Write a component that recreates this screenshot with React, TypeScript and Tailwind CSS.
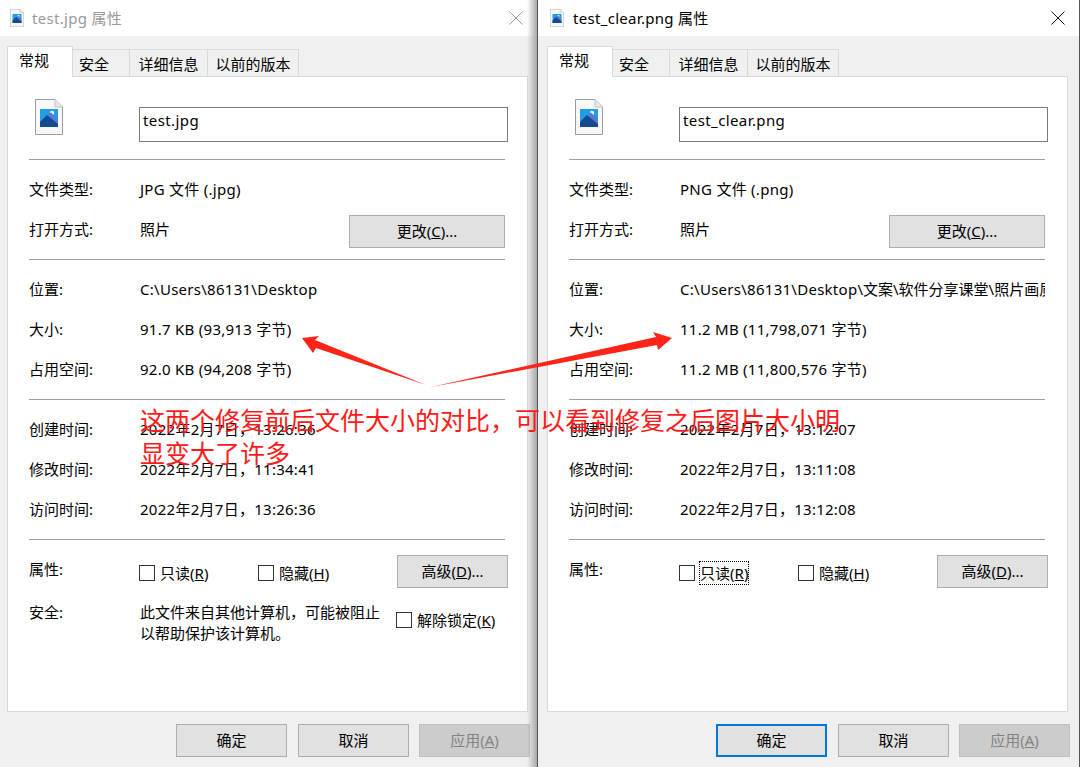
import type { ReactNode } from "react";

function FileIcon({ className }: { className: string }) {
  return (
    <svg viewBox="0 0 28 36" className={className}>
      <path d="M0.5 0.5H20L27.5 8V35.5H0.5Z" fill="#f7f7f7" stroke="#9c9c9c" />
      <path d="M20 0.5V8H27.5" fill="#e8e8e8" stroke="#c4c4c4" />
      <rect x="5" y="10" width="18" height="18" fill="#1f9ee6" />
      <circle cx="17" cy="14" r="2.2" fill="#e6f4fd" />
      <path d="M13 15L16 13.5L23 20V27L19 28Z" fill="#5a78d8" />
      <path d="M5 28V23L12 16L23 25V28Z" fill="#164a8e" />
    </svg>
  );
}

function Btn({ children, className = "" }: { children: ReactNode; className?: string }) {
  return (
    <div className={`flex h-[33px] shrink-0 items-center justify-center border border-[#adadad] bg-[#e1e1e1] text-black ${className}`}>
      {children}
    </div>
  );
}

function Row({ label, children }: { label: string; children: ReactNode }) {
  return (
    <div className="flex h-10 items-center">
      <div className="w-[111px] shrink-0">{label}</div>
      {children}
    </div>
  );
}

function Val({ children }: { children: ReactNode }) {
  return <span className="tracking-[0.27px]">{children}</span>;
}

function Section({ children }: { children: ReactNode }) {
  return <div className="w-[476px] border-t border-[#a0a0a0] pt-[9px] pb-[10px]">{children}</div>;
}

function Check({ label, k, className = "", focused = false }: { label: string; k: string; className?: string; focused?: boolean }) {
  return (
    <div className={`flex shrink-0 items-center gap-[5px] ${className}`}>
      <div className="h-4 w-4 shrink-0 border border-[#333] bg-white" />
      <span className={focused ? "outline-1 outline-dotted outline-black" : ""}>
        {label}(<u>{k}</u>)
      </span>
    </div>
  );
}

type WinProps = {
  name: string;
  typeText: string;
  location: string;
  locationTail?: string;
  size: string;
  used: string;
  created: string;
  modified: string;
  accessed: string;
  active: boolean;
  outerClass: string;
  bodyClass: string;
};

function PropsWindow(p: WinProps) {
  return (
    <div className={`relative flex h-[767px] shrink-0 flex-col ${p.outerClass}`}>
      {/* 标题栏 */}
      <div className="flex h-9 shrink-0 items-center bg-white">
        <FileIcon className={`h-[18px] w-[14px] ${p.active ? "ml-[12px]" : "ml-[10px]"}`} />
        <span className={`text-[15px] tracking-[0.3px] ${p.active ? "ml-[9px] text-black" : "ml-2 text-[#999]"}`}>{p.name} 属性</span>
        <svg viewBox="0 0 14 14" className="mr-[14px] ml-auto h-[14px] w-[14px]" fill="none" stroke={p.active ? "#111" : "#999"}>
          <path d="M0.5 0.5L13.5 13.5M13.5 0.5L0.5 13.5" />
        </svg>
      </div>

      <div className={`flex flex-1 flex-col bg-[#f0f0f0] pt-[10px] ${p.bodyClass}`}>
        {/* tabs */}
        <div className="relative z-10 -mb-px flex h-[31px] items-end text-[15px]">
          <div className="h-[31px] w-[66px] border border-b-0 border-[#d9d9d9] bg-white pt-[2px] pl-[11px]">常规</div>
          <div className="flex h-[28px] w-[57px] items-center border-y border-r border-[#d9d9d9] pt-[2px] pl-[6px]">安全</div>
          <div className="flex h-[28px] w-[78px] items-center justify-center border-y border-r border-[#d9d9d9] pt-[2px]">详细信息</div>
          <div className="flex h-[28px] w-[91px] items-center justify-center border-y border-r border-[#d9d9d9] pt-[2px]">以前的版本</div>
        </div>

        {/* 面板 */}
        <div className="h-[636px] w-[521px] border border-[#d9d9d9] bg-white pl-[21px]">
          <div className="flex h-[82px]">
            <FileIcon className="mt-[22px] ml-[6px] h-9 w-7" />
            <div className="mt-[30px] ml-[76px] h-[35px] w-[369px] border border-[#7a7a7a] pl-[3px] leading-[24px] tracking-[0.4px]">{p.name}</div>
          </div>

          <Section>
            <Row label="文件类型:"><Val>{p.typeText}</Val></Row>
            <Row label="打开方式:">
              <span className="flex-1">照片</span>
              <Btn className="mt-[5px] w-[156px]">
                <span>更改(<u>C</u>)...</span>
              </Btn>
            </Row>
          </Section>

          <Section>
            <Row label="位置:">
              <div className="w-[368px] overflow-hidden whitespace-nowrap">
                <Val>{p.location}</Val>
                {p.locationTail}
              </div>
            </Row>
            <Row label="大小:"><Val>{p.size}</Val></Row>
            <Row label="占用空间:"><Val>{p.used}</Val></Row>
          </Section>

          <Section>
            <Row label="创建时间:"><Val>{p.created}</Val></Row>
            <Row label="修改时间:"><Val>{p.modified}</Val></Row>
            <Row label="访问时间:"><Val>{p.accessed}</Val></Row>
          </Section>

          <div className="w-[476px] border-t border-[#a0a0a0] pt-[15px]">
            <div className="flex h-[33px]">
              <div className="mt-[3px] w-[110px] shrink-0">属性:</div>
              <Check label="只读" k="R" className="mt-[6px] h-[24px] w-[119px]" focused={p.active} />
              <Check label="隐藏" k="H" className="mt-[6px] h-[24px] w-[139px]" />
              <Btn className="w-[111px]">
                <span>高级(<u>D</u>)...</span>
              </Btn>
            </div>
            {!p.active && (
              <div className="mt-[14px] flex">
                <div className="-mt-px w-[111px] shrink-0">安全:</div>
                <div className="w-[256px] shrink-0 leading-[21px]">
                  此文件来自其他计算机，可能被阻止
                  <br />
                  以帮助保护该计算机。
                </div>
                <Check label="解除锁定" k="K" className="mt-[9px] h-[18px] whitespace-nowrap" />
              </div>
            )}
          </div>
        </div>

        {/* 底部按钮 */}
        <div className="mt-[12px] flex">
          <div className={`ml-[169px] flex h-[33px] w-[111px] items-center justify-center bg-[#e1e1e1] ${p.active ? "border-2 border-[#0078d7]" : "border border-[#adadad]"}`}>确定</div>
          <Btn className="ml-[11px] w-[111px]">取消</Btn>
          <div className="ml-[10px] flex h-[33px] w-[111px] items-center justify-center border border-[#bfbfbf] bg-[#ccc] text-[#838383]">
            <span>应用(<u>A</u>)</span>
          </div>
        </div>
      </div>
    </div>
  );
}

export default function App() {
  return (
    <div className="relative flex h-[767px] w-[1080px] overflow-hidden bg-[#f0f0f0] text-[15px] text-black [font-family:'Noto_Sans','Noto_Sans_CJK_SC',sans-serif]">
      <PropsWindow
        name="test.jpg"
        typeText="JPG 文件 (.jpg)"
        location="C:\Users\86131\Desktop"
        size="91.7 KB (93,913 字节)"
        used="92.0 KB (94,208 字节)"
        created="2022年2月7日，13:26:36"
        modified="2022年2月7日，11:34:41"
        accessed="2022年2月7日，13:26:36"
        active={false}
        outerClass="w-[537px]"
        bodyClass="pl-[7px]"
      />
      <PropsWindow
        name="test_clear.png"
        typeText="PNG 文件 (.png)"
        location="C:\Users\86131\Desktop"
        locationTail="\文案\软件分享课堂\照片画质"
        size="11.2 MB (11,798,071 字节)"
        used="11.2 MB (11,800,576 字节)"
        created="2022年2月7日，13:12:07"
        modified="2022年2月7日，13:11:08"
        accessed="2022年2月7日，13:12:08"
        active={true}
        outerClass="w-[543px] border-x border-[#555]"
        bodyClass="pl-[9px]"
      />

      {/* 窗口阴影 */}
      <div className="absolute top-0 left-[527px] h-[767px] w-[10px] bg-gradient-to-r from-transparent to-[#a8a8a8]" />

      {/* 红色标注 */}
      <svg className="absolute top-0 left-0 h-[767px] w-[1080px]" viewBox="0 0 1080 767" fill="#ff2318">
        <path d="M426 385L316 348L313 353L302 338L319 336L315 340Z" />
        <path d="M431 387L657 345L658 350L672 338L653 332L656 337Z" />
      </svg>
      <div className="absolute top-[404px] left-[140px] w-[710px] text-[25px] leading-[33px] text-[#ff1a1a]">
        这两个修复前后文件大小的对比，可以看到修复之后图片大小明显变大了许多
      </div>
    </div>
  );
}
